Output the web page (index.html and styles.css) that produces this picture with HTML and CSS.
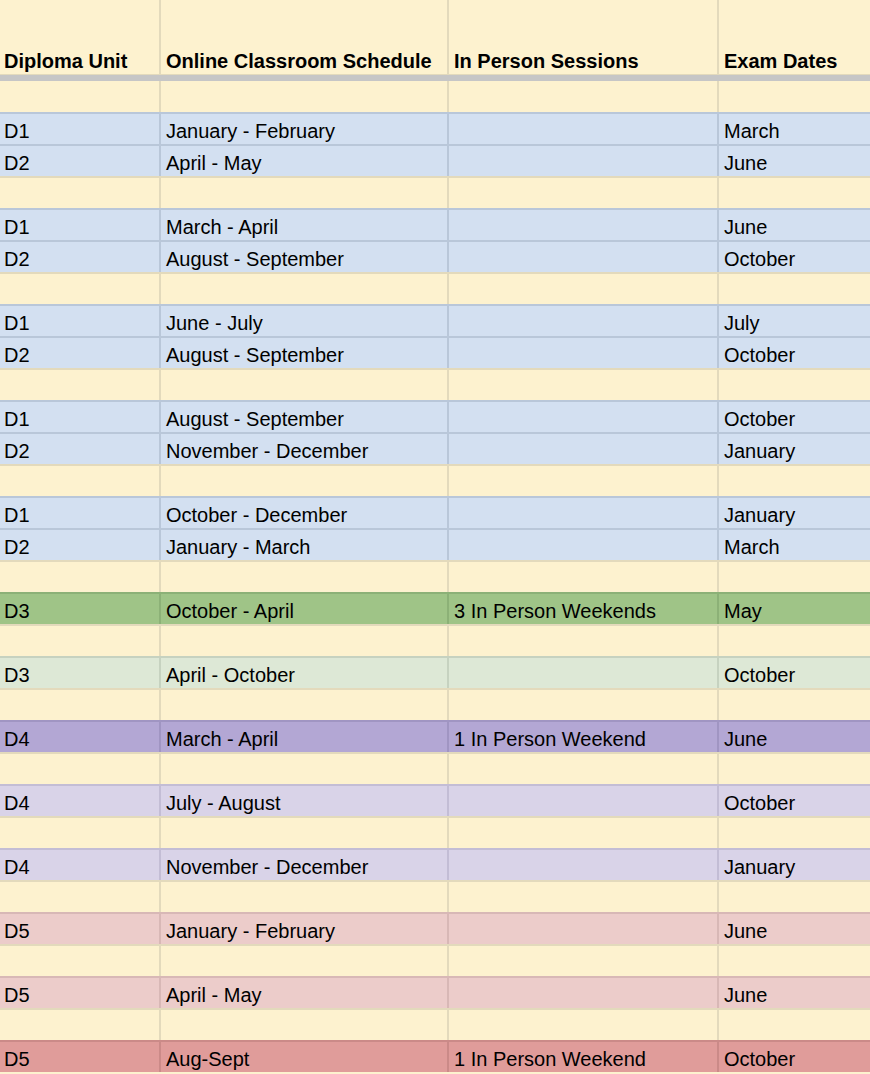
FILE: index.html
```html
<!DOCTYPE html>
<html lang="en">
<head>
<meta charset="utf-8">
<title>Diploma Schedule</title>
<link rel="stylesheet" href="styles.css">
</head>
<body>
<div class="sheet">
  <div class="row head">
    <div class="cell">Diploma Unit</div>
    <div class="cell">Online Classroom Schedule</div>
    <div class="cell">In Person Sessions</div>
    <div class="cell">Exam Dates</div>
  </div>
  <div class="freeze"></div>

  <div class="row y first"><div class="cell"></div><div class="cell"></div><div class="cell"></div><div class="cell"></div></div>
  <div class="row b"><div class="cell">D1</div><div class="cell">January - February</div><div class="cell"></div><div class="cell">March</div></div>
  <div class="row b"><div class="cell">D2</div><div class="cell">April - May</div><div class="cell"></div><div class="cell">June</div></div>

  <div class="row y"><div class="cell"></div><div class="cell"></div><div class="cell"></div><div class="cell"></div></div>
  <div class="row b"><div class="cell">D1</div><div class="cell">March - April</div><div class="cell"></div><div class="cell">June</div></div>
  <div class="row b"><div class="cell">D2</div><div class="cell">August - September</div><div class="cell"></div><div class="cell">October</div></div>

  <div class="row y"><div class="cell"></div><div class="cell"></div><div class="cell"></div><div class="cell"></div></div>
  <div class="row b"><div class="cell">D1</div><div class="cell">June - July</div><div class="cell"></div><div class="cell">July</div></div>
  <div class="row b"><div class="cell">D2</div><div class="cell">August - September</div><div class="cell"></div><div class="cell">October</div></div>

  <div class="row y"><div class="cell"></div><div class="cell"></div><div class="cell"></div><div class="cell"></div></div>
  <div class="row b"><div class="cell">D1</div><div class="cell">August - September</div><div class="cell"></div><div class="cell">October</div></div>
  <div class="row b"><div class="cell">D2</div><div class="cell">November - December</div><div class="cell"></div><div class="cell">January</div></div>

  <div class="row y"><div class="cell"></div><div class="cell"></div><div class="cell"></div><div class="cell"></div></div>
  <div class="row b"><div class="cell">D1</div><div class="cell">October - December</div><div class="cell"></div><div class="cell">January</div></div>
  <div class="row b"><div class="cell">D2</div><div class="cell">January - March</div><div class="cell"></div><div class="cell">March</div></div>

  <div class="row y"><div class="cell"></div><div class="cell"></div><div class="cell"></div><div class="cell"></div></div>
  <div class="row g1"><div class="cell">D3</div><div class="cell">October - April</div><div class="cell">3 In Person Weekends</div><div class="cell">May</div></div>

  <div class="row y"><div class="cell"></div><div class="cell"></div><div class="cell"></div><div class="cell"></div></div>
  <div class="row g3"><div class="cell">D3</div><div class="cell">April - October</div><div class="cell"></div><div class="cell">October</div></div>

  <div class="row y"><div class="cell"></div><div class="cell"></div><div class="cell"></div><div class="cell"></div></div>
  <div class="row p1"><div class="cell">D4</div><div class="cell">March - April</div><div class="cell">1 In Person Weekend</div><div class="cell">June</div></div>

  <div class="row y"><div class="cell"></div><div class="cell"></div><div class="cell"></div><div class="cell"></div></div>
  <div class="row p3"><div class="cell">D4</div><div class="cell">July - August</div><div class="cell"></div><div class="cell">October</div></div>

  <div class="row y"><div class="cell"></div><div class="cell"></div><div class="cell"></div><div class="cell"></div></div>
  <div class="row p3"><div class="cell">D4</div><div class="cell">November - December</div><div class="cell"></div><div class="cell">January</div></div>

  <div class="row y"><div class="cell"></div><div class="cell"></div><div class="cell"></div><div class="cell"></div></div>
  <div class="row r3"><div class="cell">D5</div><div class="cell">January - February</div><div class="cell"></div><div class="cell">June</div></div>

  <div class="row y"><div class="cell"></div><div class="cell"></div><div class="cell"></div><div class="cell"></div></div>
  <div class="row r3"><div class="cell">D5</div><div class="cell">April - May</div><div class="cell"></div><div class="cell">June</div></div>

  <div class="row y"><div class="cell"></div><div class="cell"></div><div class="cell"></div><div class="cell"></div></div>
  <div class="row r1"><div class="cell">D5</div><div class="cell">Aug-Sept</div><div class="cell">1 In Person Weekend</div><div class="cell">October</div></div>
</div>
</body>
</html>
```

FILE: styles.css
```css
html, body {
  margin: 0;
  padding: 0;
  background: #fdf2cf;
}

.sheet {
  display: flex;
  flex-direction: column;
  font-family: "Liberation Sans", Arial, sans-serif;
  font-size: 20px;
  line-height: 23px;
  color: #000;
}

.row {
  --bg: #fdf2cf;
  --line: #e3dabc;
  display: grid;
  grid-template-columns: 161px 288px 270px 1fr;
  box-sizing: border-box;
  height: 32px;
  border-top: 2px solid var(--line);
  background: var(--bg);
}

.row.first {
  height: 31px;
  border-top: 0;
}

.cell {
  display: flex;
  align-items: flex-end;
  box-sizing: border-box;
  padding: 0 0 1px 5px;
  border-right: 2px solid var(--line);
  white-space: nowrap;
  overflow: hidden;
}

.cell:first-child {
  padding-left: 4px;
}

.cell:last-child {
  border-right: 0;
}

.head {
  height: 75px;
  border-top: 0;
  border-bottom: 1px solid var(--line);
  font-weight: bold;
}

.head .cell {
  padding-bottom: 1px;
}

.freeze {
  height: 6px;
  background: #c6c6c6;
}

.y  { --bg: #fdf2cf; --line: #e3dabc; }
.b  { --bg: #d3e0f1; --line: #b9c7d9; }
.g1 { --bg: #9fc487; --line: #8cb177; }
.g3 { --bg: #dde8d6; --line: #c6d2c0; }
.p1 { --bg: #b3a7d4; --line: #a095c2; }
.p3 { --bg: #d9d3e8; --line: #c3bdd5; }
.r3 { --bg: #ecccca; --line: #d8b8b6; }
.r1 { --bg: #e09c9a; --line: #cb8a88; }
```
